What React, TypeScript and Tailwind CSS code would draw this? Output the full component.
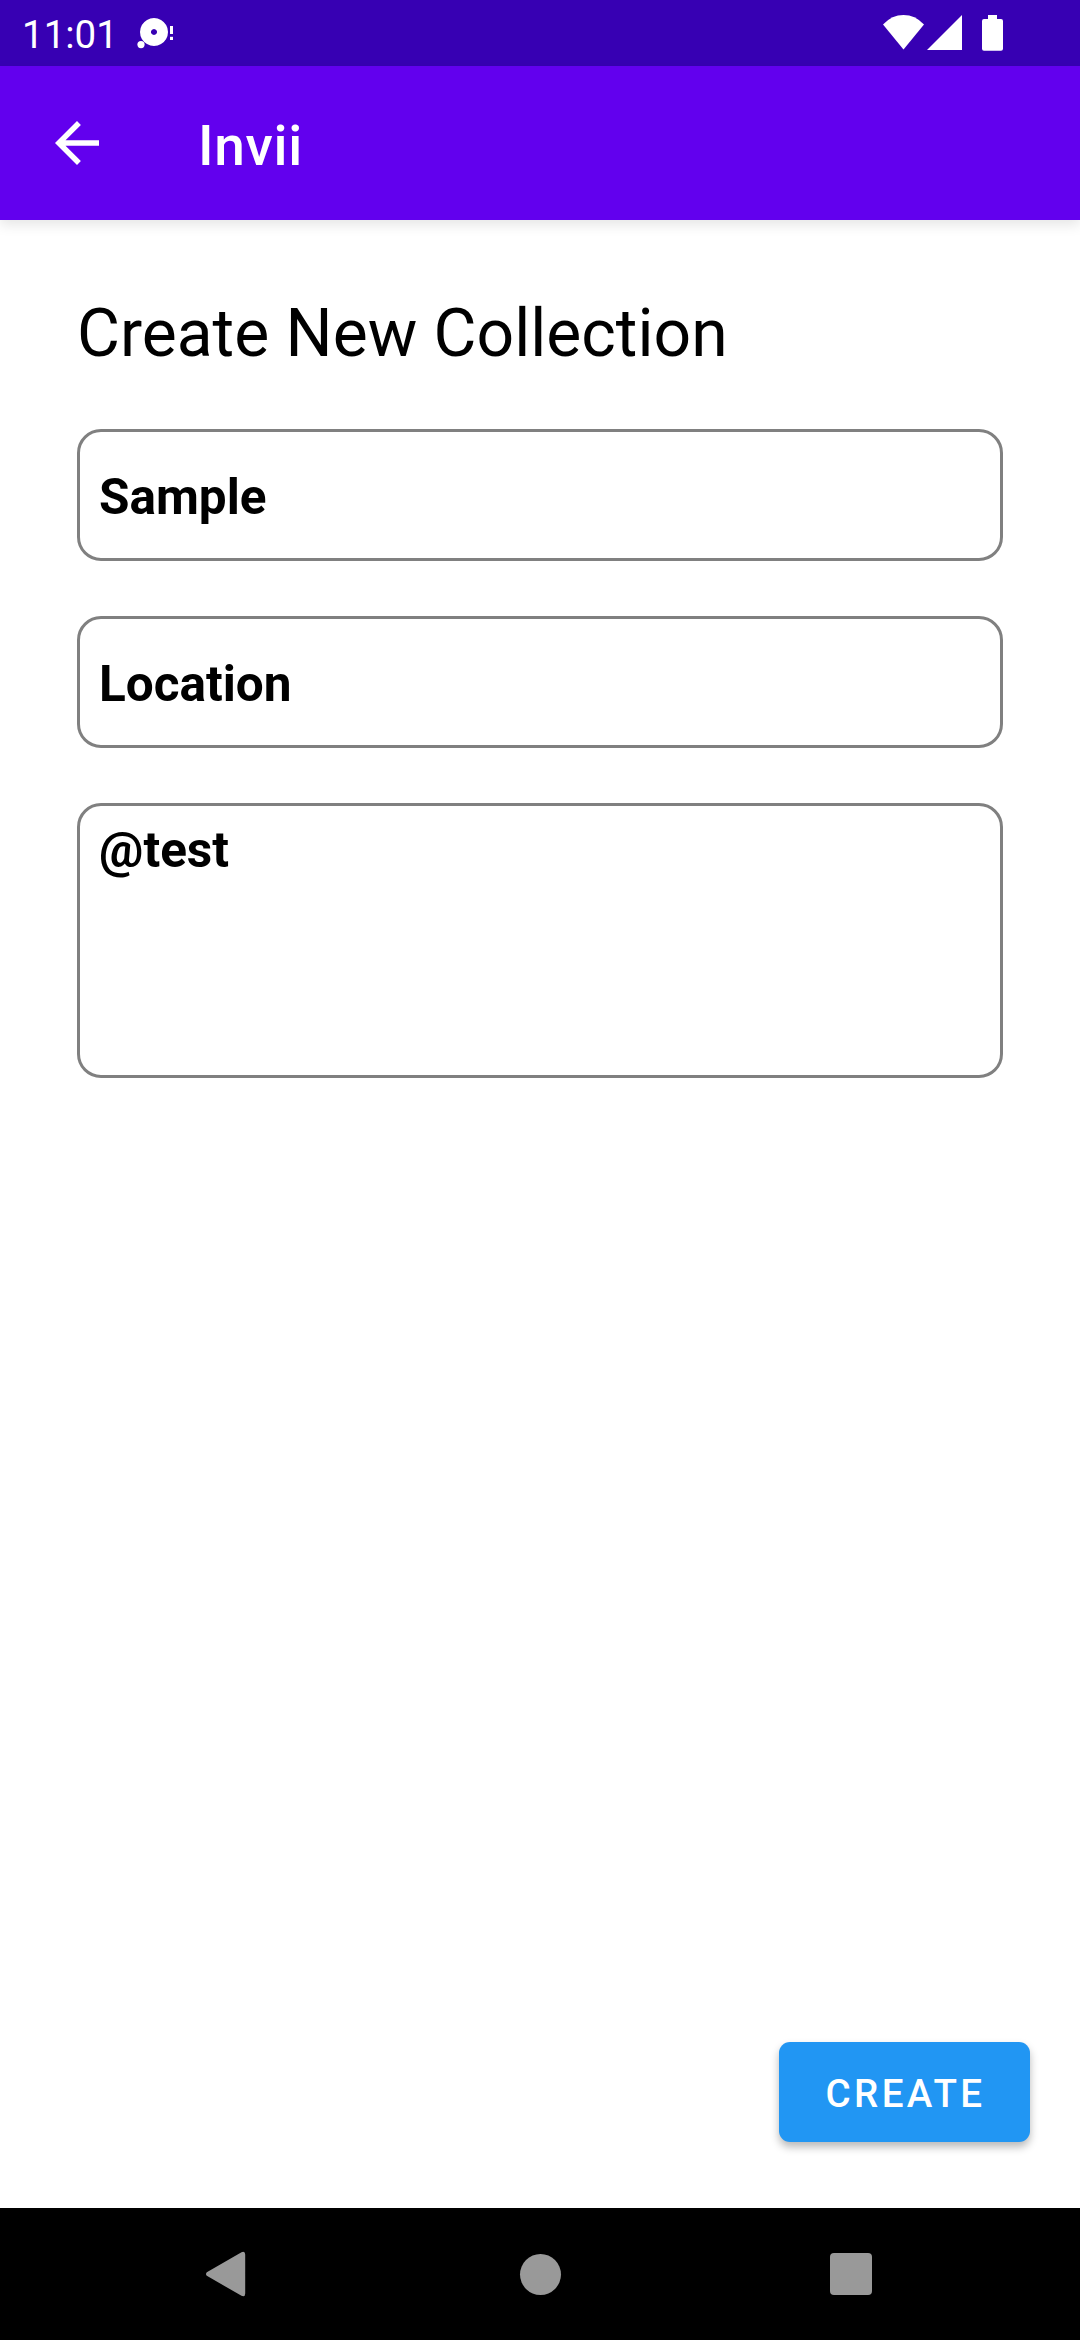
import React from "react";

function StatusBar() {
  return (
    <div className="flex h-[66px] shrink-0 items-center bg-[#3700b3] text-white">
      <span className="ml-[22px] w-[114px] pt-[3px] text-[38.5px] leading-[46px] whitespace-nowrap">11:01</span>
      <svg className="h-[32px] w-[38px]" viewBox="136 17 38 32" fill="currentColor">
        <path
          fillRule="evenodd"
          d="M154 18a14 14 0 1 0 .01 0zM154 29a3 3 0 1 1-.01 0z"
        />
        <circle cx="141" cy="44.6" r="3.6" />
        <rect x="170" y="26" width="3" height="8" />
        <rect x="170" y="36.8" width="3" height="3.2" />
      </svg>
      <svg className="mr-[76px] ml-auto h-[38px] w-[122px]" viewBox="882 14 122 38" fill="currentColor">
        <path d="M883 24.4Q892 15 903.5 15T924 24.4L903.5 49.5z" />
        <path d="M962 15v35h-35z" />
        <path d="M988 15h9v4h4q2 0 2 2v27.800q0 2-2 2h-17q-2 0-2-2V21q0-2 2-2h4z" />
      </svg>
    </div>
  );
}

function AppBar() {
  return (
    <header className="relative z-10 flex h-[154px] shrink-0 items-center bg-[#6200ee] text-white shadow-[0_5px_12px_rgba(0,0,0,0.1)]">
      <svg className="ml-[44px] size-[66px]" viewBox="0 0 24 24" fill="currentColor">
        <path d="M20 11H7.830l5.590-5.590L12 4l-8 8 8 8 1.410-1.410L7.830 13H20v-2z" />
      </svg>
      <h1 className="ml-[88px] pt-[6px] text-[55px] leading-[64px] font-medium tracking-[0.0125em]">Invii</h1>
    </header>
  );
}

function Field({ text }: { text: string }) {
  return (
    <div className="flex h-[132px] items-center rounded-[24px] border-3 border-[#808080] pt-1 pl-[19px] text-[49.5px] leading-[58px] font-bold">
      {text}
    </div>
  );
}

export default function App() {
  return (
    <div className="flex h-[2340px] w-[1080px] flex-col overflow-hidden bg-white font-['Roboto',sans-serif] text-black">
      <StatusBar />
      <AppBar />
      <main className="flex flex-1 flex-col px-[77px] pt-[75px]">
        <h2 className="mb-[56px] text-[66px] leading-[78px]">Create New Collection</h2>
        <div className="flex flex-col gap-[55px]">
          <Field text="Sample" />
          <Field text="Location" />
          <div className="h-[275px] rounded-[24px] border-3 border-[#808080] pt-[15px] pl-[19px] text-[49.5px] leading-[58px] font-bold">
            @test
          </div>
        </div>
        <button className="mt-auto mr-[-27px] mb-[66px] flex h-[100px] w-[251px] items-center justify-center self-end rounded-[11px] bg-[#2196f3] pt-[4px] pl-[2px] text-[38.5px] leading-[46px] font-medium tracking-[0.0893em] text-white shadow-[0_5px_8px_rgba(0,0,0,0.28)]">
          CREATE
        </button>
      </main>
      <nav className="flex h-[132px] shrink-0 items-center justify-between bg-black pr-[208px] pl-[205px] text-[#999999]">
        <svg className="h-[46px] w-[42px]" viewBox="0 0 42 46" fill="currentColor">
          <path d="M1.800 21.200 36.500 1.200Q40.200-.2 40.200 3.500v39q0 3.700-3.700 2.300L1.800 24.800q-1.600-1.800 0-3.600z" />
        </svg>
        <div className="ml-[3px] size-[41px] rounded-full bg-[#999999]" />
        <div className="size-[42px] rounded-[4px] bg-[#999999]" />
      </nav>
    </div>
  );
}
